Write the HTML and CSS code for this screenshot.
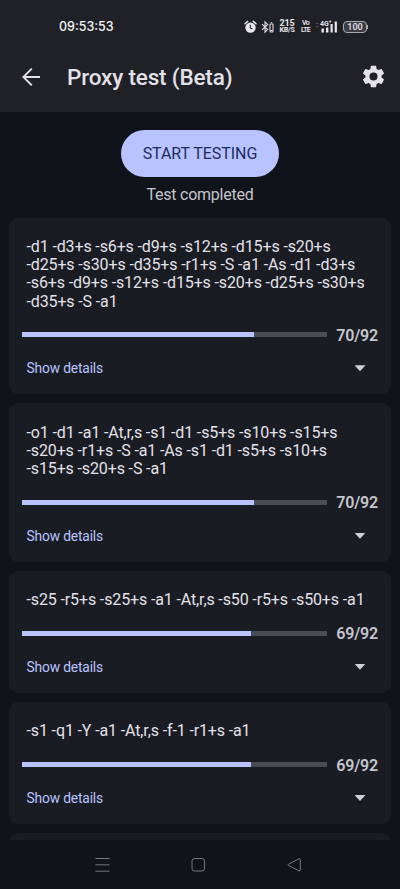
FILE: index.html
```html
<!DOCTYPE html>
<html lang="en">
<head>
<meta charset="utf-8">
<title>Proxy test (Beta)</title>
<link rel="stylesheet" href="styles.css">
</head>
<body>
<div class="screen">
  <header class="top">
    <div class="status">
      <time class="clock">09:53:53</time>
      <div class="indicators">
        <svg class="alarm" width="13" height="14" viewBox="0 0 13 14"><circle cx="6.5" cy="7.6" r="5.2" fill="#e8e8ec"/><path d="M1 3.7 3.7 1.4M12 3.7 9.3 1.4" stroke="#e8e8ec" stroke-width="1.5" stroke-linecap="round"/><path d="M6.3 4.8v3.1l2.2 1.1" fill="none" stroke="#202027" stroke-width="1.1"/></svg>
        <svg class="bluetooth" width="13" height="14" viewBox="0 0 13 14" fill="none" stroke="#dedee2" stroke-width="1.1"><path d="M1 4.2 6.7 9.6 4 12.2V1.8l2.7 2.6L1 9.8"/><rect x="9" y="4" width="3" height="8" rx=".7"/><path d="M9.7 2.8h1.6M9.5 10.5h2"/></svg>
        <div class="speed"><b>215</b><span>KB/S</span></div>
        <div class="volte"><span>Vo</span><span>LTE</span></div>
        <div class="signal">
          <svg width="22" height="14" viewBox="0 0 22 14"><g fill="#e8e8ec"><rect x="5.5" y="8.5" width="2.4" height="4"/><rect x="10" y="7.5" width="2.4" height="5"/><rect x="14.5" y="4" width="2.2" height="8.5"/><rect x="18.7" y="1.5" width="2.2" height="11"/></g><path d="m0 4 1.2-1.5L2.4 4M0 6l1.2 1.5L2.4 6" fill="#5c5c64"/></svg>
          <span class="network">4G<sup>+</sup></span>
        </div>
        <div class="battery">100</div>
      </div>
    </div>
    <div class="bar">
      <svg class="back" width="20" height="20" viewBox="0 0 20 20" fill="none" stroke="#e4e1e9" stroke-width="1.9"><path d="M19 10H2.8M10.8 1.6 2.4 10l8.4 8.4"/></svg>
      <h1>Proxy test (Beta)</h1>
      <svg class="gear" width="27" height="27" viewBox="0 0 24 24" fill="#e4e1e9"><path d="M19.14 12.94c.04-.3.06-.61.06-.94s-.02-.64-.07-.94l2.03-1.58a.49.49 0 0 0 .12-.61l-1.92-3.32a.488.488 0 0 0-.59-.22l-2.39.96c-.5-.38-1.03-.7-1.62-.94l-.36-2.54a.484.484 0 0 0-.48-.41h-3.84c-.24 0-.43.17-.47.41l-.36 2.54c-.59.24-1.13.57-1.62.94l-2.39-.96c-.22-.08-.47 0-.59.22L2.74 8.87c-.12.21-.08.47.12.61l2.03 1.58c-.05.3-.09.63-.09.94s.02.64.07.94l-2.03 1.58a.49.49 0 0 0-.12.61l1.92 3.32c.12.22.37.29.59.22l2.39-.96c.5.38 1.03.7 1.62.94l.36 2.54c.05.24.24.41.48.41h3.84c.24 0 .44-.17.47-.41l.36-2.54c.59-.24 1.13-.56 1.62-.94l2.39.96c.22.08.47 0 .59-.22l1.92-3.32a.49.49 0 0 0-.12-.61zM12 15.6A3.6 3.6 0 1 1 12 8.4a3.6 3.6 0 0 1 0 7.2z"/></svg>
    </div>
  </header>
  <main>
    <button class="start">START TESTING</button>
    <p class="result">Test completed</p>
    <section class="cards">
      <article class="card">
        <p class="command">-d1 -d3+s -s6+s -d9+s -s12+s -d15+s -s20+s<br>-d25+s -s30+s -d35+s -r1+s -S -a1 -As -d1 -d3+s<br>-s6+s -d9+s -s12+s -d15+s -s20+s -d25+s -s30+s<br>-d35+s -S -a1</p>
        <div class="score"><div class="track"><div class="fill" style="width:76.1%"></div></div><b>70/92</b></div>
        <div class="details"><span>Show details</span><i class="caret"></i></div>
      </article>
      <article class="card">
        <p class="command">-o1 -d1 -a1 -At,r,s -s1 -d1 -s5+s -s10+s -s15+s<br>-s20+s -r1+s -S -a1 -As -s1 -d1 -s5+s -s10+s<br>-s15+s -s20+s -S -a1</p>
        <div class="score"><div class="track"><div class="fill" style="width:76.1%"></div></div><b>70/92</b></div>
        <div class="details"><span>Show details</span><i class="caret"></i></div>
      </article>
      <article class="card">
        <p class="command">-s25 -r5+s -s25+s -a1 -At,r,s -s50 -r5+s -s50+s -a1</p>
        <div class="score"><div class="track"><div class="fill" style="width:75%"></div></div><b>69/92</b></div>
        <div class="details"><span>Show details</span><i class="caret"></i></div>
      </article>
      <article class="card">
        <p class="command">-s1 -q1 -Y -a1 -At,r,s -f-1 -r1+s -a1</p>
        <div class="score"><div class="track"><div class="fill" style="width:75%"></div></div><b>69/92</b></div>
        <div class="details"><span>Show details</span><i class="caret"></i></div>
      </article>
      <article class="card"></article>
    </section>
  </main>
  <nav>
    <svg width="15" height="16" viewBox="0 0 15 16" stroke="#77787d"><path d="M.5 1.5h14M.5 7.8h14M.5 14.2h14"/></svg>
    <svg width="15" height="16" viewBox="0 0 15 16" fill="none" stroke="#77787d"><rect x="1" y="1.5" width="12.5" height="12.5" rx="2.5"/></svg>
    <svg width="15" height="16" viewBox="0 0 15 16" fill="none" stroke="#77787d"><path d="M12 1.8 1.5 7.2q-1 .6 0 1.2L12 13.9q1.3.5 1.3-.8V2.6q0-1.3-1.3-.8Z"/></svg>
  </nav>
</div>
</body>
</html>
```
FILE: styles.css
```css
* { box-sizing: border-box; }
body { margin: 0; background: #10131a; font-family: Roboto, sans-serif; color: #e3e1e9; }
h1, p { margin: 0; font-weight: 400; }
.screen { height: 889px; display: flex; flex-direction: column; overflow: hidden; }
.top { height: 112px; flex: none; background: #202027; }
.status { height: 41px; padding: 12px 32px 0 59px; display: flex; justify-content: space-between; align-items: center; }
.clock { font: 500 12.5px/16px Inter, sans-serif; color: #f3f3f5; }
.indicators { display: flex; align-items: center; height: 16px; }
.bluetooth { margin-left: 4px; }
.speed, .volte { display: flex; flex-direction: column; align-items: center; color: #e8e8ec; }
.speed { margin-left: 5px; width: 16px; }
.speed b { font-size: 9px; line-height: 8.5px; letter-spacing: -.2px; }
.speed span { font-size: 7px; line-height: 7.5px; font-weight: 700; letter-spacing: -.2px; }
.volte { margin-left: 6px; width: 9px; font-size: 7px; line-height: 7px; font-weight: 600; letter-spacing: -.7px; }
.signal { position: relative; margin-left: 6px; height: 14px; }
.signal svg { display: block; }
.network { position: absolute; left: 4px; top: 0; font-size: 7px; line-height: 8px; font-weight: 700; white-space: nowrap; }
.network sup { font-size: 5px; line-height: 0; }
.battery { position: relative; margin-left: 5px; margin-right: 1px; width: 24px; height: 12px; border: 1px solid #aaaab0; border-radius: 4px; background: #3c3c43; font-size: 9px; line-height: 10px; text-align: center; font-weight: 500; }
.battery::after { content: ""; position: absolute; right: -2px; top: 3px; width: 1px; height: 4px; background: #aaaab0; }
.bar { height: 71px; display: flex; align-items: center; padding: 0 13px 0 21px; }
h1 { margin-left: 26px; flex: 1; font-size: 22.5px; line-height: 28px; font-weight: 500; letter-spacing: -.17px; }
main { flex: 1; min-height: 0; overflow: hidden; padding: 18px 9px 0; display: flex; flex-direction: column; align-items: center; }
.start { flex: none; width: 158px; height: 46.5px; border: 0; border-radius: 24px; padding: 1px 0 0; background: #b9c3ff; color: #202c61; font: 450 16px/20px Roboto, sans-serif; letter-spacing: -.05px; }
.result { margin-top: 8.5px; font-size: 16px; line-height: 20px; color: #c5c5cd; letter-spacing: -.25px; }
.cards { margin-top: 12.5px; align-self: stretch; display: flex; flex-direction: column; gap: 9.1px; }
.card { flex: none; min-height: 60px; border-radius: 9px; background: #1a1c24; padding: 20.5px 13px 0; }
.command { padding-left: 4.5px; font-size: 16px; line-height: 18.2px; white-space: nowrap; letter-spacing: -.13px; }
.score { margin-top: 14px; height: 20px; display: flex; align-items: center; }
.track { width: 305.5px; height: 5px; background: #4a4c54; }
.fill { height: 100%; background: #b9c3ff; }
.score b { margin-left: 9px; padding-top: 2px; font-size: 16px; line-height: 18px; font-weight: 600; color: #c5c5cd; letter-spacing: -.2px; }
.details { height: 49.3px; padding: 0 12.5px 2.5px 4.5px; display: flex; align-items: center; justify-content: space-between; font-size: 13.8px; color: #b9c3ff; letter-spacing: -.16px; }
.caret { width: 11px; height: 6px; background: #d0ced8; clip-path: polygon(0 0, 100% 0, 50% 100%); }
nav { height: 49px; flex: none; display: flex; justify-content: center; align-items: center; gap: 81px; padding-right: 4px; }
```
